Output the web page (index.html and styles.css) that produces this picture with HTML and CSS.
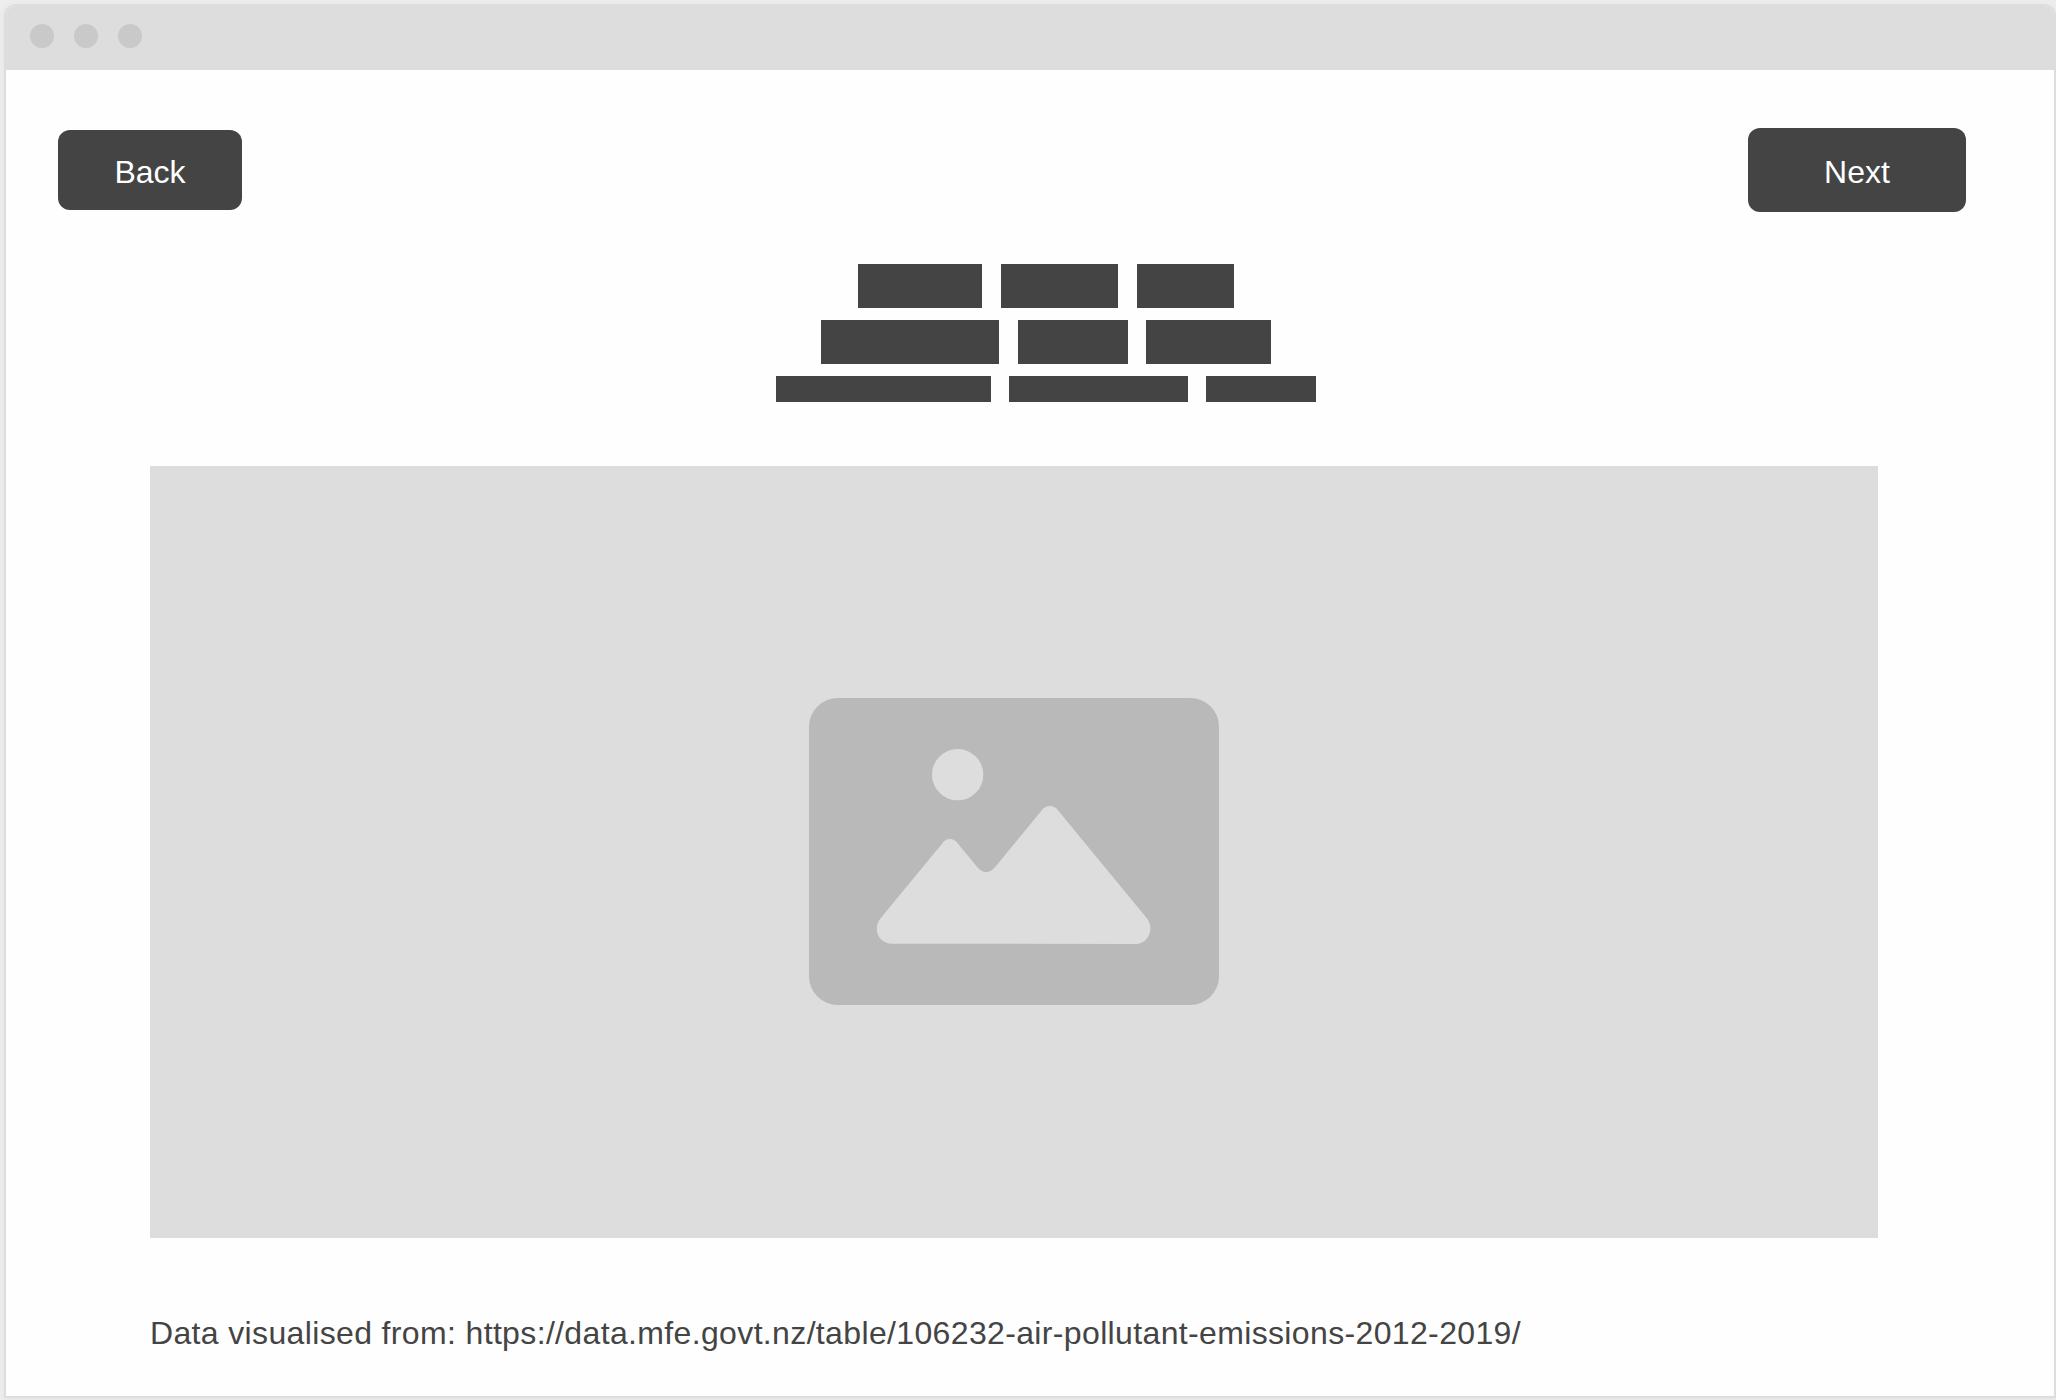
FILE: index.html
```html
<!DOCTYPE html>
<html lang="en">
<head>
<meta charset="utf-8">
<title>Air pollutant emissions</title>
<link rel="stylesheet" href="styles.css">
</head>
<body>
<div class="window">
  <header class="titlebar">
    <span class="dot"></span><span class="dot"></span><span class="dot"></span>
  </header>
  <main class="content">
    <nav class="nav">
      <button class="btn btn-back">Back</button>
      <button class="btn btn-next">Next</button>
    </nav>
    <div class="heading">
      <div class="line line-1"><i></i><i></i><i></i></div>
      <div class="line line-2"><i></i><i></i><i></i></div>
      <div class="line line-3"><i></i><i></i><i></i></div>
    </div>
    <div class="figure">
      <svg class="picture" viewBox="0 0 1230 921" aria-hidden="true">
        <rect width="1230" height="921" rx="86" fill="#b9b9b9"/>
        <g fill="#dddddd">
          <circle cx="446" cy="230" r="77"/>
          <path d="M213 663L399 437Q408 423 423 423Q437 423 447 437L505 508Q516 522 531 522Q546 522 558 508L697 338Q708 324 723 324Q738 324 748 338L1013 660C1038 692 1018 738 980 738L250 737C210 737 190 695 213 663Z"/>
        </g>
      </svg>
    </div>
    <p class="source">Data visualised from: https://data.mfe.govt.nz/table/106232-air-pollutant-emissions-2012-2019/</p>
  </main>
</div>
</body>
</html>
```
FILE: styles.css
```css
* {
  box-sizing: border-box;
}

body {
  margin: 0;
  height: 1400px;
  padding: 4px 0 2px 4px;
  overflow: hidden;
  background: #ededed;
  font-family: "Liberation Sans", Arial, sans-serif;
}

.window {
  height: 1394px;
  border: 2px solid #dddddd;
  border-radius: 12px 12px 0 0;
  background: #fefefe;
  box-shadow: 0 2px 8px rgba(0, 0, 0, 0.04);
}

.titlebar {
  display: flex;
  align-items: center;
  gap: 20px;
  height: 64px;
  padding: 0 0 4px 24px;
  border-radius: 10px 10px 0 0;
  background: #dddddd;
}

.dot {
  width: 24px;
  height: 24px;
  border-radius: 50%;
  background: #c9c9c9;
}

.content {
  padding: 58px 88px 0 52px;
}

.nav {
  display: flex;
  justify-content: space-between;
  align-items: center;
}

.btn {
  border: 0;
  border-radius: 12px;
  background: #444444;
  color: #ffffff;
  font: 32px/36px "Liberation Sans", Arial, sans-serif;
}

.btn-back {
  width: 184px;
  height: 80px;
  padding: 4px 0 0;
}

.btn-next {
  width: 218px;
  height: 84px;
  padding: 4px 0 0;
}

.heading {
  display: flex;
  flex-direction: column;
  align-items: center;
  gap: 12px;
  width: 540px;
  margin: 52px 0 0 718px;
}

.line {
  display: grid;
  height: 44px;
}

.line i {
  background: #444444;
}

.line-1 {
  grid-template-columns: 124px 117px 97px;
  gap: 19px;
}

.line-2 {
  grid-template-columns: 178px 110px 125px;
  column-gap: 18.5px;
}

.line-3 {
  grid-template-columns: 215px 179px 110px;
  gap: 18px;
  height: 26px;
}

.figure {
  display: flex;
  justify-content: center;
  width: 1728px;
  height: 772px;
  margin: 64px 0 0 92px;
  padding-top: 232px;
  background: #dddddd;
}

.picture {
  width: 410px;
  height: 307px;
}

.source {
  margin: 77px 0 0 92px;
  color: #444444;
  font-size: 32px;
  line-height: 36px;
  letter-spacing: 0.355px;
  white-space: nowrap;
}
```
